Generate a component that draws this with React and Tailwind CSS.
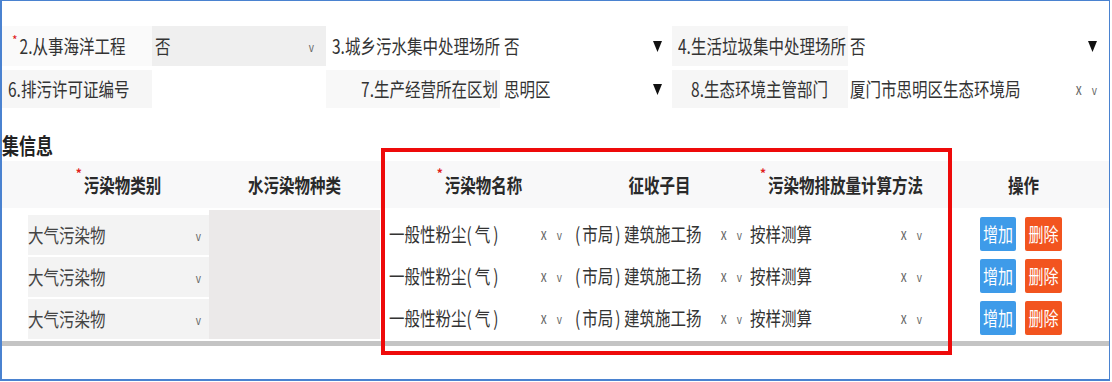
import React from 'react';

// tall-looking glyphs, as in the (vertically stretched) screenshot
function T({ children, className = '' }) {
  return <span className={`inline-block scale-y-[1.28] whitespace-nowrap ${className}`}>{children}</span>;
}

function Req() {
  return <span className="mr-[2px] -translate-y-[6px] inline-block text-[12px] leading-none text-[#e02020]">*</span>;
}

function Tri() {
  return (
    <svg width="9" height="13" viewBox="0 0 9 13">
      <polygon points="0,1 9,1 4.5,12" fill="#111" />
    </svg>
  );
}

function Chev({ x = false }) {
  return (
    <span className="flex items-center gap-[10px] text-[12px] text-[#666]">
      {x && <T>x</T>}
      <T className="text-[10px]">v</T>
    </span>
  );
}

const rows = [0, 1, 2];

export default function App() {
  return (
    <div className="relative h-[382px] w-[1112px] overflow-hidden bg-white font-['Noto_Sans_CJK_SC','Noto_Sans',sans-serif] text-[15.5px] text-[#333]">
      <div className="h-[381px] w-[1110px] border-b-2 border-l-2 border-r border-t border-[#4a82d0]">
        {/* top form */}
        <div className="flex flex-col gap-[4px] pt-[25px]">
          <div className="flex h-[40px] items-stretch">
            <div className="flex w-[150px] items-center bg-[#fafafa] pl-[10px]">
              <Req />
              <T>2.从事海洋工程</T>
            </div>
            <div className="flex w-[174px] items-center justify-between bg-[#efefef] pl-[3px] pr-[12px]">
              <T>否</T>
              <Chev />
            </div>
            <div className="flex w-[174px] items-center pl-[6px]">
              <T>3.城乡污水集中处理场所</T>
            </div>
            <div className="flex w-[172px] items-center justify-between pl-[4px] pr-[10px]">
              <T>否</T>
              <Tri />
            </div>
            <div className="flex w-[176px] items-center bg-[#f6f6f6] pl-[6px]">
              <T>4.生活垃圾集中处理场所</T>
            </div>
            <div className="flex flex-1 items-center justify-between pl-[2px] pr-[12px]">
              <T>否</T>
              <Tri />
            </div>
          </div>
          <div className="flex h-[38px] items-stretch">
            <div className="flex w-[150px] items-center bg-[#f6f6f6] pl-[6px]">
              <T>6.排污许可证编号</T>
            </div>
            <div className="w-[174px] bg-white" />
            <div className="flex w-[174px] items-center justify-end bg-[#f8f8f8] pr-[2px]">
              <T>7.生产经营所在区划</T>
            </div>
            <div className="flex w-[172px] items-center justify-between pl-[4px] pr-[10px]">
              <T>思明区</T>
              <Tri />
            </div>
            <div className="flex w-[176px] items-center justify-end bg-[#f6f6f6] pr-[20px]">
              <T>8.生态环境主管部门</T>
            </div>
            <div className="flex flex-1 items-center justify-between pl-[2px] pr-[12px]">
              <T>厦门市思明区生态环境局</T>
              <Chev x />
            </div>
          </div>
        </div>

        {/* section title */}
        <div className="mt-[26px] flex h-[22px] items-center text-[17px] font-bold text-[#222]">
          <T>集信息</T>
        </div>

        {/* table header */}
        <div className="mt-[5px] grid h-[47px] grid-cols-[26px_181px_171px_7px_185px_175px_185px_1fr] items-center bg-[#f8f8f9] font-semibold text-[#2a2a2a]">
          <div />
          <div className="flex justify-center"><Req /><T>污染物类别</T></div>
          <div className="flex justify-center"><T>水污染物种类</T></div>
          <div />
          <div className="flex justify-center"><Req /><T>污染物名称</T></div>
          <div className="flex justify-center"><T>征收子目</T></div>
          <div className="flex justify-center pl-[4px]"><Req /><T>污染物排放量计算方法</T></div>
          <div className="flex justify-center pl-[6px]"><T>操作</T></div>
        </div>

        {/* table body */}
        <div className="mt-[5px] grid grid-cols-[26px_181px_171px_7px_185px_175px_185px_1fr] grid-rows-[42px_42px_42px]">
          {rows.map((r) => (
            <React.Fragment key={r}>
              <div style={{ gridRow: r + 1, gridColumn: 1 }} />
              <div
                style={{ gridRow: r + 1, gridColumn: 2 }}
                className="flex items-center justify-between border-t-2 border-white bg-[#f3f3f3] pr-[8px] text-[#444]"
              >
                <T>大气污染物</T>
                <Chev />
              </div>
              <div style={{ gridRow: r + 1, gridColumn: 5 }} className="flex items-center justify-between pl-[2px] pr-[10px]">
                <T>一般性粉尘(<span className="mx-[3px]">气</span>)</T>
                <Chev x />
              </div>
              <div style={{ gridRow: r + 1, gridColumn: 6 }} className="flex items-center justify-between pl-[3px] pr-[5px]">
                <T>(<span className="mx-[2px]">市局</span>) 建筑施工扬</T>
                <Chev x />
              </div>
              <div style={{ gridRow: r + 1, gridColumn: 7 }} className="flex items-center justify-between pl-[3px] pr-[10px]">
                <T>按样测算</T>
                <Chev x />
              </div>
              <div style={{ gridRow: r + 1, gridColumn: 8 }} className="flex items-center gap-[9px] pl-[48px]">
                <span className="flex h-[34px] w-[36px] items-center justify-center rounded-[2px] bg-[#3e9be9] text-[15px] text-white">
                  <T>增加</T>
                </span>
                <span className="flex h-[34px] w-[37px] items-center justify-center rounded-[2px] bg-[#f2541f] text-[15px] text-white">
                  <T>删除</T>
                </span>
              </div>
            </React.Fragment>
          ))}
          <div className="col-start-3 row-span-3 row-start-1 -mt-[3px] bg-[#ebe9e9]" />
        </div>

        {/* scrollbar */}
        <div className="mt-[2px] h-[5px] w-[1107px] bg-[#c4c4c4]" />
      </div>

      {/* annotation box */}
      <div className="absolute left-[381px] top-[148px] h-[207px] w-[571px] border-[4px] border-[#ee0a0a]" />
    </div>
  );
}
